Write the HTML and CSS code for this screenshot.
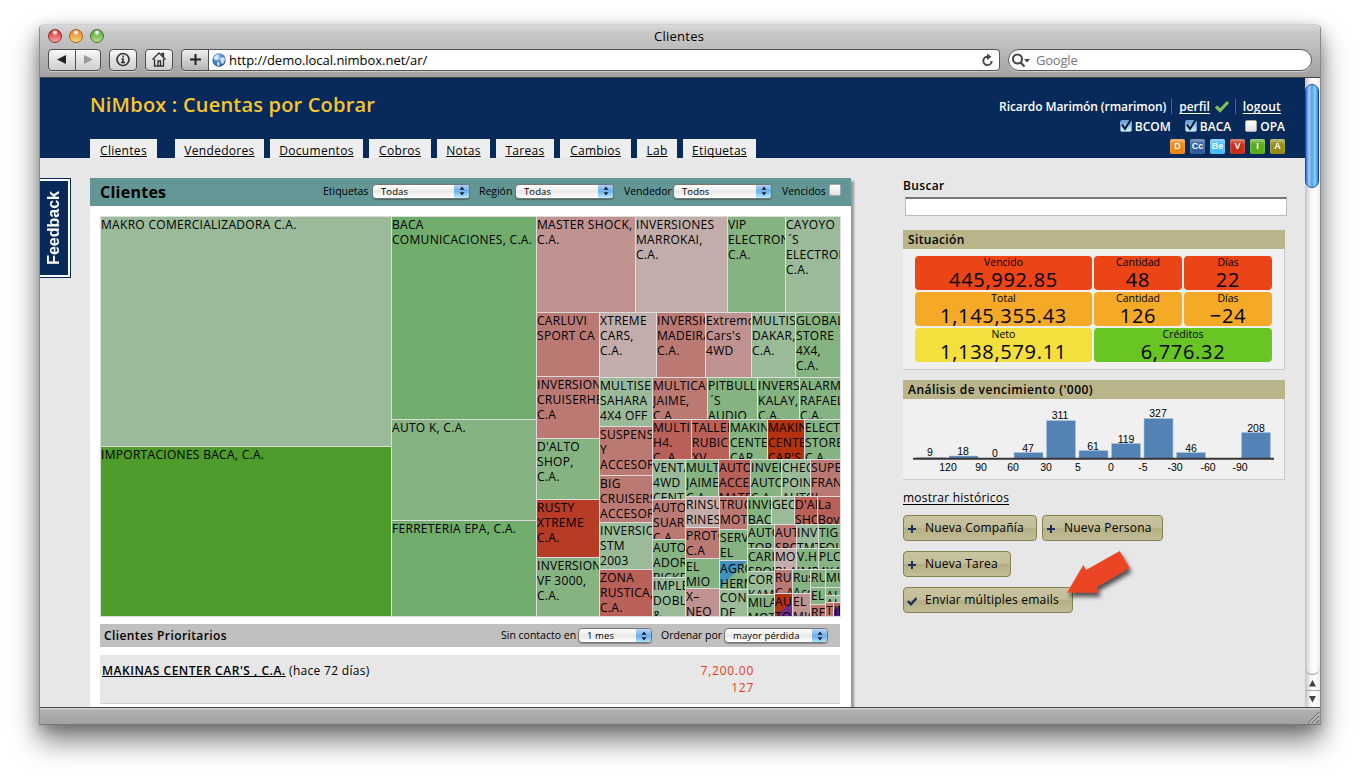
FILE: index.html
```html
<!DOCTYPE html>
<html lang="es">
<head>
<meta charset="utf-8">
<title>Clientes</title>
<link rel="stylesheet" href="styles.css">
</head>
<body>
<div class="window">
  <div class="chrome">
    <div class="titlebar"><i class="light red"></i><i class="light amber"></i><i class="light lime"></i><span class="wintitle">Clientes</span></div>
    <div class="toolbar">
      <div class="btn pair"><svg width="26" height="19"><path d="M17 5v9L8 9.500z" fill="#222"/></svg><svg class="divide" width="26" height="19"><path d="M8 5v9l9-4.500z" fill="#999"/></svg></div>
      <div class="btn single info"><svg width="26" height="19" fill="none" stroke="#333"><circle cx="13" cy="9.500" r="6" stroke-width="1.700"/><path d="M13 5.500v2M11.500 9H13v3.500M11 12.500h4" stroke-width="1.600"/></svg></div>
      <div class="btn single home"><svg width="26" height="19" fill="none" stroke="#333" stroke-width="1.300"><path d="M6.500 9.500L13 3l6.500 6.500M8.500 9v7h9V9M16 5.500V3.500h1.500V7M12 16v-5h2.500v5"/></svg></div>
      <div class="btn plus"><svg width="26" height="19"><path d="M8 9.500h11M13.500 4v11" stroke="#222" stroke-width="2"/></svg></div>
      <div class="url"><svg width="14" height="14"><defs><radialGradient id="globe" cx=".4" cy=".3" r=".75"><stop offset="0" stop-color="#a9cdf0"/><stop offset=".5" stop-color="#4a86cb"/><stop offset="1" stop-color="#1c4f9c"/></radialGradient></defs><circle cx="7" cy="7" r="6.700" fill="url(#globe)"/><path d="M2 4q3-3 5-2l-1 2 1 2-3 1-2-1zM8 5l4-1 1 3-2 4-2-1zM5 9l3 1-1 3-2-1z" fill="#e4f1fb" opacity=".85"/></svg><span class="address">http://demo.local.nimbox.net/ar/</span><svg class="reload" width="14" height="14"><path d="M7.500 3.700A4.200 4.200 0 1 0 11.700 8" fill="none" stroke="#444" stroke-width="1.900"/><path d="M7 .5L11.500 3.800 7 7z" fill="#444"/></svg></div>
      <div class="search"><svg width="22" height="19"><circle cx="8.500" cy="8" r="4.500" fill="none" stroke="#444" stroke-width="2"/><path d="M11.500 11.500l4 4" stroke="#444" stroke-width="2.200"/><path d="M15 8h6l-3 3.500z" fill="#444"/></svg><span>Google</span></div>
    </div>
  </div>
  <div class="view">
    <div class="page">
      <header class="head">
        <div class="brandside">
          <h1>NiMbox : Cuentas por Cobrar</h1>
          <nav><a class="t1">Clientes</a><a class="t2">Vendedores</a><a class="t3">Documentos</a><a class="t4">Cobros</a><a class="t5">Notas</a><a class="t6">Tareas</a><a class="t7">Cambios</a><a class="t8">Lab</a><a class="t9">Etiquetas</a></nav>
        </div>
        <div class="user">
          <div class="who"><span class="name">Ricardo Marimón (rmarimon)</span><span class="profile"><u>perfil</u><svg width="16" height="14"><path d="M2 7.500l4 4L14 3" fill="none" stroke="#85bd5c" stroke-width="3.200"/></svg></span><u class="logout">logout</u></div>
          <div class="orgs"><span><i class="check on"><svg width="14" height="14"><path d="M3 5.500l3 4.500L11.500 1" fill="none" stroke="#0c1a30" stroke-width="2"/></svg></i>BCOM</span><span><i class="check on"><svg width="14" height="14"><path d="M3 5.500l3 4.500L11.500 1" fill="none" stroke="#0c1a30" stroke-width="2"/></svg></i>BACA</span><span><i class="check"></i>OPA</span></div>
          <div class="badges"><b class="b1">D</b><b class="b2">Cc</b><b class="b3">Be</b><b class="b4">V</b><b class="b5">I</b><b class="b6">A</b></div>
        </div>
      </header>
      <div class="body">
        <div class="gutter"><div class="feedback"><span>Feedback</span></div></div>
        <main class="panel">
          <div class="panelhead"><h2>Clientes</h2>
            <label class="l1">Etiquetas</label><div class="select s1">Todas<i><svg width="10" height="14"><path d="M2.500 5.800L5 2.500l2.500 3.300zM2.500 8.200h5L5 11.500z" fill="#123"/></svg></i></div>
            <label class="l2">Región</label><div class="select s2">Todas<i><svg width="10" height="14"><path d="M2.500 5.800L5 2.500l2.500 3.300zM2.500 8.200h5L5 11.500z" fill="#123"/></svg></i></div>
            <label class="l3">Vendedor</label><div class="select s3">Todos<i><svg width="10" height="14"><path d="M2.500 5.800L5 2.500l2.500 3.300zM2.500 8.200h5L5 11.500z" fill="#123"/></svg></i></div>
            <label class="l4">Vencidos</label><i class="check"></i>
          </div>
          <div class="map row">
            <div class="col" style="width:291px">
              <div class="tile a" style="height:230px">MAKRO COMERCIALIZADORA C.A.</div>
              <div class="tile e" style="height:170px">IMPORTACIONES BACA, C.A.</div>
            </div>
            <div class="col" style="width:145px">
              <div class="tile c" style="height:203px">BACA<br>COMUNICACIONES, C.A.</div>
              <div class="tile b" style="height:101px">AUTO K, C.A.</div>
              <div class="tile c" style="height:96px">FERRETERIA EPA, C.A.</div>
            </div>
            <div class="col" style="width:304px">
              <div class="row" style="height:96px">
                <div class="tile q" style="width:99px">MASTER SHOCK,<br>C.A.</div>
                <div class="tile p" style="width:92px">INVERSIONES<br>MARROKAI,<br>C.A.</div>
                <div class="tile b" style="width:58px">VIP<br>ELECTRONICA<br>C.A.</div>
                <div class="tile a" style="width:55px">CAYOYO<br>&thinsp;´S<br>ELECTRONIC<br>C.A.</div>
              </div>
              <div class="row" style="height:304px">
                <div class="col" style="width:63px">
                  <div class="tile r" style="height:64px">CARLUVI<br>SPORT CA</div>
                  <div class="tile r" style="height:62px">INVERSIONES<br>CRUISERHE<br>C.A</div>
                  <div class="tile b" style="height:61px">D'ALTO<br>SHOP,<br>C.A.</div>
                  <div class="tile t" style="height:58px">RUSTY<br>XTREME<br>C.A.</div>
                  <div class="tile b" style="height:59px">INVERSIONES<br>VF 3000,<br>C.A.</div>
                </div>
                <div class="col" style="width:241px">
                  <div class="row" style="height:65px">
                    <div class="tile p" style="width:57px">XTREME<br>CARS,<br>C.A.</div>
                    <div class="tile r" style="width:49px">INVERSIONES<br>MADEIRA<br>C.A.</div>
                    <div class="tile q" style="width:46px">Extremo<br>Cars's<br>4WD</div>
                    <div class="tile a" style="width:44px">MULTIS<br>DAKAR,<br>C.A.</div>
                    <div class="tile b" style="width:45px">GLOBAL<br>STORE<br>4X4,<br>C.A.</div>
                  </div>
                  <div class="row" style="height:239px">
                    <div class="col" style="width:53px">
                      <div class="tile a" style="height:49px">MULTISERVI<br>SAHARA<br>4X4 OFF<br>ROAD</div>
                      <div class="tile r" style="height:49px">SUSPENSION<br>Y<br>ACCESORIOS</div>
                      <div class="tile r" style="height:47px">BIG<br>CRUISERS<br>ACCESORIOS</div>
                      <div class="tile a" style="height:47px">INVERSIONES<br>STM<br>2003</div>
                      <div class="tile s" style="height:47px">ZONA<br>RUSTICA,<br>C.A.</div>
                    </div>
                    <div class="col" style="width:188px">
                      <div class="row" style="height:42px">
                        <div class="tile r" style="width:55px">MULTICAR<br>JAIME,<br>C.A</div>
                        <div class="tile b" style="width:50px">PITBULL<br>&thinsp;´S<br>AUDIO</div>
                        <div class="tile b" style="width:42px">INVERS<br>KALAY,<br>C.A.</div>
                        <div class="tile b" style="width:41px">ALARMAS<br>RAFAEL<br>C.A.</div>
                      </div>
                      <div class="row" style="height:40px">
                        <div class="tile s" style="width:39px">MULTIS<br>H4.<br>C. A.</div>
                        <div class="tile s" style="width:38px">TALLER<br>RUBICON<br>XV</div>
                        <div class="tile b" style="width:38px">MAKINAS<br>CENTER<br>CAR</div>
                        <div class="tile u" style="width:37px">MAKINAS<br>CENTER<br>CAR'S</div>
                        <div class="tile b" style="width:36px">ELECTRO<br>STORE<br>C.A.</div>
                      </div>
                      <div class="row" style="height:157px">
                        <div class="col" style="width:33px">
                          <div class="tile a" style="height:40px">VENTAS<br>4WD<br>CENTER</div>
                          <div class="tile r" style="height:40px">AUTO<br>SUAREZ<br>C.A.</div>
                          <div class="tile b" style="height:38px">AUTO<br>ADORNO<br>PICKER</div>
                          <div class="tile a" style="height:39px">IMPLE<br>DOBLE<br>&amp;</div>
                        </div>
                        <div class="col" style="width:155px">
                          <div class="row" style="height:37px">
                            <div class="tile b" style="width:33px">MULTI<br>JAIME<br>C.A.</div>
                            <div class="tile s" style="width:32px">AUTO<br>ACCES<br>MATE</div>
                            <div class="tile b" style="width:31px">INVER<br>AUTO<br>C.A.</div>
                            <div class="tile a" style="width:29px">CHECK<br>POINT<br>AUTO</div>
                            <div class="tile r" style="width:30px">SUPER<br>FRAN<br>II</div>
                          </div>
                          <div class="row" style="height:120px">
                            <div class="col" style="width:34px">
                              <div class="tile p" style="height:31px">RINSU<br>RINES</div>
                              <div class="tile r" style="height:31px">PROTO<br>C.A</div>
                              <div class="tile b" style="height:30px">EL<br>MIO</div>
                              <div class="tile q" style="height:28px">X–<br>NEO</div>
                            </div>
                            <div class="col" style="width:28px">
                              <div class="tile r" style="height:33px">TRUCK<br>MOTO</div>
                              <div class="tile b" style="height:31px">SERVI<br>EL</div>
                              <div class="tile blue" style="height:29px">AGRO<br>HERM</div>
                              <div class="tile a" style="height:27px">CON<br>DE</div>
                            </div>
                            <div class="col" style="width:93px">
                              <div class="row" style="height:28px">
                                <div class="tile b" style="width:24px">INVER<br>BACA</div>
                                <div class="tile a" style="width:23px">GEO</div>
                                <div class="tile s" style="width:23px">D'AL<br>SHOP</div>
                                <div class="tile s" style="width:23px">La<br>Boveda</div>
                              </div>
                              <div class="row" style="height:92px">
                                <div class="col" style="width:27px">
                                  <div class="tile b" style="height:24px">AUTO<br>TOR</div>
                                  <div class="tile b" style="height:23px">CARI<br>SPOR</div>
                                  <div class="tile a" style="height:23px">COR<br>KAM</div>
                                  <div class="tile b" style="height:22px">MILA<br>MOT</div>
                                </div>
                                <div class="col" style="width:66px">
                                  <div class="row" style="height:24px">
                                    <div class="tile r" style="width:22px">AUTO<br>SPO</div>
                                    <div class="tile a" style="width:22px">INV<br>TMT</div>
                                    <div class="tile b" style="width:22px">TIG<br>FOL</div>
                                  </div>
                                  <div class="row" style="height:21px">
                                    <div class="tile p" style="width:22px">MOV<br>BLA</div>
                                    <div class="tile b" style="width:22px">V.H<br>IMP</div>
                                    <div class="tile b" style="width:22px">PLC<br>4X4</div>
                                  </div>
                                  <div class="row" style="height:47px">
                                    <div class="col" style="width:18px">
                                      <div class="tile r" style="height:24px">RUS<br>C.A</div>
                                      <div class="tile violet" style="height:23px">AUT<br>TOY</div>
                                    </div>
                                    <div class="col" style="width:18px">
                                      <div class="tile b" style="height:24px">Rust<br>Acc</div>
                                      <div class="tile q" style="height:23px">EL<br>MIO</div>
                                    </div>
                                    <div class="col" style="width:30px">
                                      <div class="row" style="height:18px">
                                        <div class="tile b" style="width:15px">RUS</div>
                                        <div class="tile b" style="width:15px">MUL</div>
                                      </div>
                                      <div class="row" style="height:29px">
                                        <div class="col" style="width:15px">
                                          <div class="tile b" style="height:17px">EL</div>
                                          <div class="tile r" style="height:12px">RE</div>
                                        </div>
                                        <div class="col" style="width:15px">
                                          <div class="tile b" style="height:8px">AL</div>
                                          <div class="tile a" style="height:7px">AL</div>
                                          <div class="row" style="height:14px">
                                            <div class="tile r" style="width:8px">T</div>
                                            <div class="tile plum" style="width:7px">II</div>
                                          </div>
                                        </div>
                                      </div>
                                    </div>
                                  </div>
                                </div>
                              </div>
                            </div>
                          </div>
                        </div>
                      </div>
                    </div>
                  </div>
                </div>
              </div>
            </div>
          </div>
          <div class="priorhead"><h3>Clientes Prioritarios</h3>
            <label class="l5">Sin contacto en</label><div class="select s5">1 mes<i><svg width="10" height="14"><path d="M2.500 5.800L5 2.500l2.500 3.300zM2.500 8.200h5L5 11.500z" fill="#123"/></svg></i></div>
            <label class="l6">Ordenar por</label><div class="select s6">mayor pérdida<i><svg width="10" height="14"><path d="M2.500 5.800L5 2.500l2.500 3.300zM2.500 8.200h5L5 11.500z" fill="#123"/></svg></i></div>
          </div>
          <div class="client"><div><b>MAKINAS CENTER CAR'S , C.A.</b> (hace 72 días)</div><div class="owed">7,200.00<br>127</div></div>
        </main>
        <aside class="side">
          <h4 class="find">Buscar</h4>
          <div class="field"></div>
          <section class="box">
            <h4>Situación</h4>
            <div class="cells">
              <div class="red">Vencido<b>445,992.85</b></div><div class="red">Cantidad<b>48</b></div><div class="red">Días<b>22</b></div>
              <div class="orange">Total<b>1,145,355.43</b></div><div class="orange">Cantidad<b>126</b></div><div class="orange">Días<b>−24</b></div>
              <div class="yellow">Neto<b>1,138,579.11</b></div><div class="green">Créditos<b>6,776.32</b></div>
            </div>
          </section>
          <section class="box second">
            <h4 class="wide">Análisis de vencimiento ('000)</h4>
            <svg class="chart" width="381" height="80">
              <g fill="#5383b5" stroke="#a9c4de" stroke-width=".6"><path d="M13.500 58.500h29v1h-29zM46 57h29v3H46zM111 53.500h29V60h-29zM143.500 21.500h29V60h-29zM176 51.500h29V60h-29zM208.500 44.500h29V60h-29zM241 19.500h29V60h-29zM273.500 53.500h29V60h-29zM338.500 33.500h29V60h-29z"/></g>
              <path d="M10 59.700h361" stroke="#3a3535" stroke-width="2"/>
              <g class="nums"><text x="27" y="57">9</text><text x="60" y="56">18</text><text x="92" y="58">0</text><text x="125" y="53">47</text><text x="157" y="20">311</text><text x="190" y="51">61</text><text x="223" y="44">119</text><text x="255" y="18">327</text><text x="288" y="53">46</text><text x="353" y="33">208</text>
              <text x="45" y="72">120</text><text x="78" y="72">90</text><text x="110" y="72">60</text><text x="143" y="72">30</text><text x="175" y="72">5</text><text x="208" y="72">0</text><text x="240" y="72">-5</text><text x="272" y="72">-30</text><text x="305" y="72">-60</text><text x="337" y="72">-90</text></g>
            </svg>
          </section>
          <u class="history">mostrar históricos</u>
          <div class="actions">
            <div class="action w1"><svg width="10" height="12"><path d="M1 6h8M5 2v8" stroke="#17305f" stroke-width="2"/></svg>Nueva Compañía</div>
            <div class="action w2"><svg width="10" height="12"><path d="M1 6h8M5 2v8" stroke="#17305f" stroke-width="2"/></svg>Nueva Persona</div>
            <div class="action w3"><svg width="10" height="12"><path d="M1 6h8M5 2v8" stroke="#17305f" stroke-width="2"/></svg>Nueva Tarea</div>
            <div class="action w4"><svg width="10" height="12"><path d="M.800 6.200L4 9.200 9.500 3" fill="none" stroke="#17305f" stroke-width="2.400"/></svg>Enviar múltiples emails</div>
          </div>
        </aside>
      </div>
    </div>
    <div class="scroll">
      <div class="track"><div class="thumb"></div></div>
      <svg width="15" height="33"><path d="M4 11.500L7.500 5l3.500 6.500zM4 21h7l-3.500 6.500z" fill="#444"/><path d="M0 15.500h15" stroke="#aaa"/></svg>
    </div>
  </div>
  <div class="status"><svg width="12" height="12"><path d="M1 12L12 1M5 12l7-7M9 12l3-3" stroke="#666"/><path d="M2 12.500L12.500 2M6 12.500L12.500 6" stroke="#ddd" stroke-width=".7"/></svg></div>
</div>
<svg class="pointer" width="90" height="60"><path d="M7 46.700L23.300 19l2.700 5L59.700 5l10 17.300-33 19 2.300 5.400z" fill="#ec4526"/></svg>
</body>
</html>
```
FILE: styles.css
```css
* { box-sizing: border-box; }
body { margin: 0; width: 1360px; height: 778px; overflow: hidden; background: #fff; font: 12px/15px "Open Sans", sans-serif; letter-spacing: .3px; color: #000; position: relative; }
h1, h2, h3, h4 { margin: 0; font-weight: 600; }
svg { display: block; flex: none; }
u { text-underline-offset: 1.5px; text-decoration-skip-ink: none; }

.window { width: 1282px; height: 701px; margin: 0 0 0 39px; translate: 0 24px; border: 1px solid #8a8a8a; border-top-color: #d2d2d2; border-bottom-color: #777; border-radius: 5px 5px 0 0; display: flex; flex-direction: column; box-shadow: 0 16px 28px rgba(0,0,0,.5), 0 4px 14px rgba(0,0,0,.22); }
.chrome { height: 53px; flex: none; background: linear-gradient(#d8d8d8, #c9c9c9 15%, #a2a2a2); border-bottom: 1px solid #444; border-radius: 4px 4px 0 0; }
.titlebar { height: 23px; display: flex; align-items: center; padding-left: 8px; gap: 7px; }
.light { width: 14px; height: 14px; border-radius: 50%; border: 1px solid; margin-top: -2px; }
.light.red { background: radial-gradient(circle at 50% 20%, #fff 5%, transparent 30%), linear-gradient(#d01f20, #f9a9a5); border-color: #91282a; }
.light.amber { background: radial-gradient(circle at 50% 20%, #fff 5%, transparent 30%), linear-gradient(#e57318, #fbdd75); border-color: #a7621f; }
.light.lime { background: radial-gradient(circle at 50% 20%, #fff 5%, transparent 30%), linear-gradient(#4f9d34, #b5e08a); border-color: #43762c; }
.wintitle { margin-left: 543px; font-size: 13px; letter-spacing: .25px; }
.toolbar { display: flex; padding: 1px 0 0 8px; height: 22px; }
.btn { height: 22px; border: 1px solid #4e4e4e; border-radius: 4px; background: linear-gradient(#fafafa, #e2e2e2 50%, #cfcfcf); box-shadow: 0 1px #ccc; display: flex; flex: none; }
.pair { width: 53px; margin-right: 8px; }
.pair .divide { border-left: 1px solid #4e4e4e; height: 20px; }
.single { width: 28px; margin-right: 8px; }
.plus { width: 28px; border-radius: 4px 0 0 4px; background: linear-gradient(#eee, #b5b5b5); }
.url { width: 791px; height: 22px; flex: none; border: 1px solid #555; border-left: 0; border-radius: 0 4px 4px 0; background: #fff; box-shadow: 0 1px #ccc; display: flex; align-items: center; padding: 0 5px 0 3px; gap: 3px; font-size: 13px; }
.address { letter-spacing: -.03px; }
.reload { margin-left: auto; }
.search { width: 304px; height: 22px; flex: none; margin-left: 8px; border: 1px solid #555; border-radius: 11px; background: #fff; box-shadow: 0 1px #ccc; display: flex; align-items: center; gap: 5px; color: #777; font-size: 13px; letter-spacing: -.2px; }

.view { flex: none; height: 630px; display: flex; overflow: hidden; border-bottom: 1px solid #444; }
.page { width: 1265px; background: #e7e7e7; }
.head { height: 80px; background: #082a5b; display: flex; }
.brandside { width: 760px; padding-left: 50px; display: flex; flex-direction: column; }
.head h1 { height: 61px; padding-top: 13px; font-size: 20px; line-height: 28px; color: #f6c52d; letter-spacing: .19px; white-space: nowrap; }
nav { display: flex; gap: 6px; }
nav a { height: 19px; background: #eee; text-align: center; line-height: 24px; text-decoration: underline; text-underline-offset: 1px; text-decoration-skip-ink: none; overflow: hidden; }
.t1 { width: 67px; margin-right: 12px; } .t2 { width: 89px; } .t3 { width: 93px; } .t4 { width: 62px; } .t5 { width: 53px; } .t6 { width: 58px; } .t7 { width: 71px; } .t8 { width: 40px; } .t9 { width: 73px; }
.user { width: 485px; color: #fff; font-weight: 600; display: flex; flex-direction: column; align-items: flex-end; padding-top: 21px; letter-spacing: 0; }
.who { display: flex; height: 15px; white-space: nowrap; }
.who > * { padding: 0 6px 0 7px; border-left: 1px solid #4a648a; }
.who .name { border: 0; letter-spacing: -.08px; padding-right: 5px; }
.who .profile { display: flex; gap: 4px; padding-right: 5px; }
.who .logout { padding-right: 4px; letter-spacing: .2px; }
.orgs { display: flex; gap: 14px; height: 20px; align-items: center; margin-top: 2px; margin-bottom: 1px; }
.orgs span { display: flex; align-items: center; gap: 3px; }
.check { width: 12px; height: 12px; flex: none; border: 1px solid #aaa; border-radius: 2px; background: linear-gradient(#fff, #e2e2e2); }
.panelhead .check { margin-top: -3px; }
.check.on { background: linear-gradient(#5f9fdc, #d0f0fd); border-color: #7aa4cf; }
.check svg { margin: -2px 0 0 -2px; overflow: visible; }
.badges { display: flex; gap: 5px; margin-top: 2px; }
.badges b { width: 15px; height: 15px; border-radius: 2px; font: 900 9px/15px "Liberation Sans", sans-serif; text-align: center; letter-spacing: 0; box-shadow: inset 0 3px 3px rgba(255,255,255,.4); }
.b1 { background: #ee8617; } .b2 { background: #2d5c99; } .b3 { background: #48bdf3; } .b4 { background: #c52d16; } .b5 { background: #59ac1c; } .b6 { background: #948e18; }

.body { display: flex; height: 549px; }
.gutter { width: 50px; padding-top: 20px; }
.feedback { width: 31px; height: 100px; background: #082a5b; border: 1px solid #082a5b; border-left: 0; box-shadow: inset -2px 2px #fff, inset 0 -2px #fff; display: flex; align-items: center; justify-content: center; padding: 0 3px 1px 0; }
.feedback span { writing-mode: vertical-rl; transform: rotate(180deg); font: bold 16px/18px "Liberation Sans", sans-serif; color: #fff; letter-spacing: 0; }
.panel { width: 761px; height: 529px; margin-top: 20px; background: #fff; box-shadow: 3px 3px 2px #999; }
.panelhead { height: 28px; background: #629796; display: flex; align-items: center; padding: 0 9px 2px 10px; font-size: 10.5px; letter-spacing: -.03px; }
.panelhead h2 { font-size: 16px; font-weight: 700; width: 223px; padding-top: 2px; letter-spacing: .25px; }
.panelhead label, .priorhead label { flex: none; white-space: nowrap; }
.l1 { width: 49px; } .l2 { width: 36px; margin-left: 9px; } .l3 { width: 49px; margin-left: 10px; } .l4 { width: 47px; margin-left: 10px; }
.select { height: 15px; flex: none; border: 1px solid #777; border-radius: 4px; background: linear-gradient(#fff, #e9e9e9 50%, #fff); box-shadow: 0 1px 1px rgba(0,0,0,.3); display: flex; justify-content: space-between; align-items: center; padding-left: 8px; font-size: 9.5px; line-height: 13px; letter-spacing: .1px; white-space: nowrap; overflow: hidden; }
.select i { width: 15px; height: 14px; background: linear-gradient(#b9d6f5, #6eaeea 50%, #b9ecff); display: flex; justify-content: center; }
.s1 { width: 98px; } .s2 { width: 99px; } .s3 { width: 99px; }

.map { width: 741px; height: 401px; margin: 10px 0 0 10px; border: solid #dcdcdc; border-width: 0 1px 1px 0; }
.row { display: flex; flex-direction: row; flex: none; }
.col { display: flex; flex-direction: column; flex: none; }
.tile { flex: none; overflow: hidden; white-space: nowrap; border: solid #dcdcdc; border-width: 1px 0 0 1px; }
.a { background: #9aba9a; } .b { background: #85b382; } .c { background: #70ac6c; } .e { background: #4d9c2c; }
.p { background: #c3adab; } .q { background: #c09390; } .r { background: #bb7974; } .s { background: #b96059; } .t { background: #b73c25; } .u { background: #b43210; }
.blue { background: linear-gradient(135deg, #4292c0 48%, #85b382 50%); }
.violet { background: linear-gradient(135deg, #b43210 60%, #6f2b85 62%); }
.plum { background: linear-gradient(135deg, #b96059 40%, #4c2180 40%); }
.priorhead { width: 740px; height: 23px; margin: 7px 0 8px 10px; background: #c0c0c0; display: flex; align-items: center; padding-left: 4px; font-size: 10.5px; letter-spacing: 0; }
.priorhead h3 { width: 397px; font-size: 12px; letter-spacing: .4px; }
.l5 { width: 77px; } .l6 { width: 63px; margin-left: 9px; }
.s5 { width: 74px; } .s6 { width: 104px; }
.client { width: 740px; height: 49px; margin-left: 10px; background: #e7e7e7; border-bottom: 1px solid #d2d2d2; display: flex; justify-content: space-between; padding: 7px 86px 0 2px; line-height: 17px; }
.client b { font-weight: 600; text-decoration: underline; text-decoration-skip-ink: none; letter-spacing: .52px; }
.owed { text-align: right; color: #ea3a1c; letter-spacing: .75px; }

.side { width: 402px; padding: 20px 0 0 52px; }
.side h4 { font-size: 12px; letter-spacing: .35px; }
.side h4.find { height: 19px; }
.field { width: 382px; height: 19px; margin-left: 2px; background: #fff; border: 1px solid #bbb; border-top: 2px solid #777; }
.box { width: 382px; height: 140px; margin-top: 14px; background: #f0f0f0; border: solid #ccc; border-width: 0 1px 1px 0; }
.box.second { height: 100px; margin-top: 10px; }
.box h4 { width: 382px; height: 19px; line-height: 19px; padding-left: 5px; background: #b9b489; }
.box h4.wide { letter-spacing: .48px; }
.cells { display: grid; grid-template-columns: 177px 88px 88px; grid-auto-rows: 34px; gap: 2px; padding: 7px 0 0 12px; }
.cells div { border-radius: 4px; text-align: center; font-size: 10.5px; line-height: 13px; letter-spacing: 0; }
.cells b { display: block; font-weight: 400; font-size: 20px; line-height: 21px; letter-spacing: .7px; }
.cells .red { background: #ea4417; } .cells .orange { background: #f4a927; } .cells .yellow { background: #f3df3e; } .cells .green { background: #69c524; grid-column: span 2; }
.chart { letter-spacing: 0; }
.nums { font: 10.5px "Liberation Sans", sans-serif; text-anchor: middle; }
.history { display: block; margin-top: 10px; height: 15px; letter-spacing: .22px; }
.actions { display: flex; flex-wrap: wrap; gap: 10px 5px; margin-top: 10px; width: 270px; letter-spacing: .22px; }
.action { height: 26px; border: 1px solid #86804f; border-radius: 4px; background: linear-gradient(#c9c4a1, #c3bd97 50%, #b4ae82 51%, #c3be98); display: flex; align-items: center; gap: 8px; padding: 0 0 1px 3px; white-space: nowrap; }
.action svg { margin-top: 3px; }
.w1 { width: 134px; } .w2 { width: 121px; } .w3 { width: 108px; } .w4 { width: 170px; }

.scroll { width: 15px; background: linear-gradient(90deg, #c4c4c4, #f2f2f2 35%, #fff 60%, #eee); }
.track { height: 597px; padding-top: 6px; border-bottom: 1px solid #999; border-radius: 0 0 8px 8px; }
.thumb { width: 14px; height: 104px; border-radius: 7px; border: 1px solid #1b4ba6; background: linear-gradient(90deg, #2a6edc, #a5cdf7 25%, #4f9ff0 50%, #8fd4ff 75%, #3978cf); }
.status { height: 16px; flex: none; background: linear-gradient(#d0d0d0 1px, #b1b1b1 2px, #a3a3a3); display: flex; justify-content: flex-end; align-items: flex-end; padding: 0 1px 1px 0; }
.pointer { position: absolute; left: 1060px; top: 546px; filter: drop-shadow(2px 4px 2px rgba(0,0,0,.65)); }
```
